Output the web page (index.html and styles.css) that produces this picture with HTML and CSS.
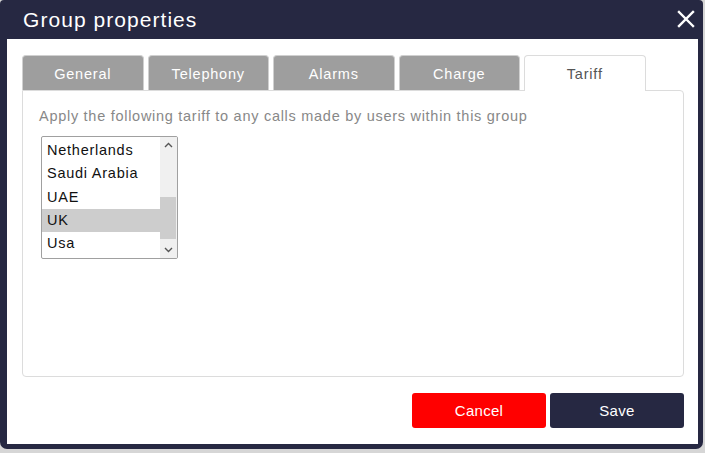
FILE: index.html
```html
<!DOCTYPE html>
<html>
<head>
<meta charset="utf-8">
<link rel="stylesheet" href="styles.css">
</head>
<body>
<div class="dialog">
  <div class="titlebar">
    <span class="title">Group properties</span>
    <svg class="close" width="18" height="18" viewBox="0 0 18 18"><path d="M2 2 L16 16 M16 2 L2 16" stroke="#fff" stroke-width="2.4" stroke-linecap="square"/></svg>
  </div>
  <div class="content">
    <div class="tabs">
      <div class="tab">General</div>
      <div class="tab">Telephony</div>
      <div class="tab">Alarms</div>
      <div class="tab">Charge</div>
      <div class="tab active">Tariff</div>
    </div>
    <div class="panel">
      <p class="desc">Apply the following tariff to any calls made by users within this group</p>
      <div class="listbox">
        <div class="items">
          <div class="item">Netherlands</div>
          <div class="item">Saudi Arabia</div>
          <div class="item">UAE</div>
          <div class="item selected">UK</div>
          <div class="item">Usa</div>
        </div>
        <div class="scrollbar">
          <svg class="arrow up" width="9" height="6" viewBox="0 0 9 6"><path d="M1 5 L4.5 1.5 L8 5" fill="none" stroke="#555" stroke-width="1.4"/></svg>
          <div class="thumb"></div>
          <svg class="arrow down" width="9" height="6" viewBox="0 0 9 6"><path d="M1 1 L4.5 4.5 L8 1" fill="none" stroke="#555" stroke-width="1.4"/></svg>
        </div>
      </div>
    </div>
    <div class="actions">
      <button class="btn cancel">Cancel</button>
      <button class="btn save">Save</button>
    </div>
  </div>
</div>
</body>
</html>
```

FILE: styles.css
```css
html, body {
  margin: 0;
  padding: 0;
  background: #d6d6d6;
  font-family: "Liberation Sans", Arial, sans-serif;
}
.dialog {
  width: 703px;
  height: 449px;
  box-sizing: border-box;
  background: #262842;
  padding: 0 5px 5px 7px;
  border-radius: 4px 4px 7px 7px;
  display: flex;
  flex-direction: column;
}
.titlebar {
  height: 39px;
  flex: none;
  display: flex;
  align-items: center;
  justify-content: space-between;
  padding: 0 3px 0 16px;
}
.title {
  color: #fff;
  font-size: 21px;
  letter-spacing: 1.05px;
  margin-top: 1px;
}
.close {
  display: block;
  margin-top: -2px;
}
.content {
  flex: 1;
  background: #fff;
  padding: 16px 14px 16px 15px;
  display: flex;
  flex-direction: column;
}
.tabs {
  display: flex;
  gap: 4px;
  height: 35px;
  flex: none;
}
.tab {
  width: 121.5px;
  box-sizing: border-box;
  background: #9e9e9e;
  color: #fff;
  font-size: 14.5px;
  letter-spacing: 0.8px;
  display: flex;
  align-items: center;
  justify-content: center;
  padding-top: 2px;
  border-radius: 4px 4px 0 0;
  border: 1px solid #d0d0d0;
  border-bottom: none;
}
.tab.active {
  background: #fff;
  color: #555;
  border: 1px solid #dcdcdc;
  border-bottom: none;
  position: relative;
  z-index: 1;
  height: 36px;
  padding-top: 0;
}
.panel {
  flex: 1;
  border: 1px solid #dcdcdc;
  border-radius: 0 4px 4px 4px;
  padding: 0 16px;
}
.desc {
  margin: 16px 0 0 0;
  color: #888;
  font-size: 14.5px;
  letter-spacing: 0.72px;
  line-height: 18px;
}
.listbox {
  margin: 11px 0 0 2px;
  width: 137px;
  height: 123px;
  box-sizing: border-box;
  border: 1px solid #a0a0a0;
  border-radius: 2px;
  display: flex;
  overflow: hidden;
}
.items {
  flex: 1;
  padding-top: 2px;
}
.item {
  height: 23.3px;
  line-height: 23px;
  padding-left: 5px;
  font-size: 14.5px;
  letter-spacing: 0.75px;
  color: #111;
}
.item.selected {
  background: #cdcdcd;
}
.scrollbar {
  width: 17px;
  background: #f0f0f0;
  position: relative;
}
.thumb {
  position: absolute;
  left: 0;
  right: 1px;
  top: 60px;
  height: 42px;
  background: #cdcdcd;
}
.arrow {
  position: absolute;
  left: 4px;
  display: block;
}
.arrow.up { top: 5px; }
.arrow.down { bottom: 5px; }
.actions {
  display: flex;
  justify-content: flex-end;
  gap: 4px;
  margin-top: 16px;
}
.btn {
  width: 134px;
  height: 35px;
  border: none;
  border-radius: 3px;
  color: #fff;
  font-family: "Liberation Sans", Arial, sans-serif;
  font-size: 15px;
  letter-spacing: 0.3px;
  padding: 0;
}
.cancel { background: #ff0000; }
.save { background: #262842; }
```
